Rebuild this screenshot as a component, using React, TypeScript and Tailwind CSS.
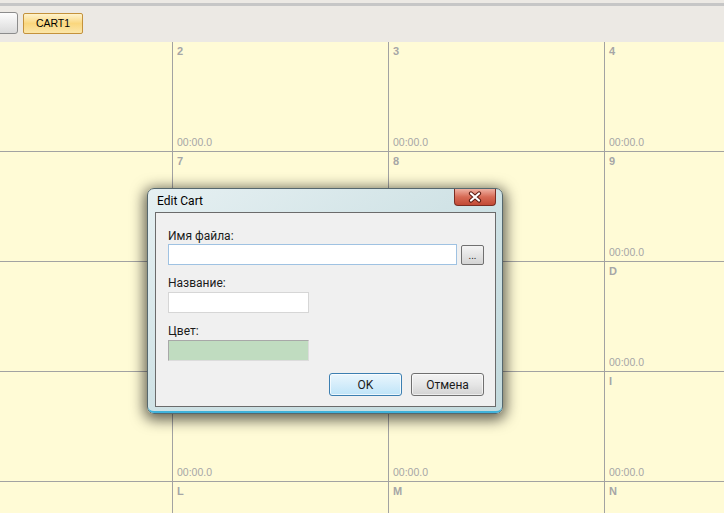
import React from "react";

const rows: string[][] = [
  ["1", "2", "3", "4", "5"],
  ["6", "7", "8", "9", "0"],
  ["A", "B", "C", "D", "E"],
  ["F", "G", "H", "I", "J"],
  ["K", "L", "M", "N", "O"],
];

function Cell({ label, hidden, noTime }: { label: string; hidden: boolean; noTime: boolean }) {
  return (
    <div className="w-[216px] shrink-0 h-full border-l border-[#a2a2a2] flex flex-col justify-between pl-[4px] pt-[3px] pb-[2px] text-[#a6a6a6] text-[11px] leading-[13px] [font-family:'Liberation_Sans',Arial,sans-serif]">
      {hidden ? null : (
        <>
          <span className="font-bold">{label}</span>
          {noTime ? null : <span className="text-[10.5px]">00:00.0</span>}
        </>
      )}
    </div>
  );
}

function CloseX() {
  return (
    <svg width="16" height="12" viewBox="0 0 16 12">
      <path d="M4 2.5 L12 9.5 M12 2.5 L4 9.5" stroke="#5b1c12" strokeWidth="4.2" strokeLinecap="round" />
      <path d="M4 2.5 L12 9.5 M12 2.5 L4 9.5" stroke="#ffffff" strokeWidth="2.2" strokeLinecap="round" />
    </svg>
  );
}

export default function App() {
  return (
    <div className="relative w-[724px] h-[513px] overflow-hidden bg-[#ece9e4]">
      {/* toolbar */}
      <div className="h-[42px] flex flex-col">
        <div className="h-[3px] bg-[#ece9e4]" />
        <div className="h-[3px] bg-[#c6c6c6]" />
        <div className="flex items-start pt-[6px]">
          <div className="ml-[-20px] w-[38px] h-[22px] rounded-[3px] border border-[#8c8c8c] bg-gradient-to-b from-[#fdfdfd] to-[#dadada]" />
          <div className="ml-[5px] mt-[1px] w-[60px] h-[21px] rounded-[2px] border border-[#c4923c] bg-gradient-to-b from-[#fff3cc] via-[#fad77e] to-[#fbe6a8] flex items-center justify-center text-[10.5px] text-black [font-family:'Liberation_Sans',Arial,sans-serif]">
            CART1
          </div>
        </div>
      </div>

      {/* grid */}
      <div className="ml-[-44px] flex flex-col bg-[#fffbd6]">
        {rows.map((r, i) => (
          <div key={i} className="h-[110px] shrink-0 flex border-b border-[#a2a2a2]">
            {r.map((l, j) => (
              <Cell key={l} label={l} hidden={j === 0 || j === 4} noTime={i === 4} />
            ))}
          </div>
        ))}
      </div>

      {/* dialog */}
      <div className="absolute left-[147px] top-[188px] w-[356px] h-[226px] rounded-[7px] border border-[#56686e] bg-gradient-to-br from-[#e6f0f2] via-[#cfe2e5] to-[#c3dadd] shadow-[0_3px_14px_3px_rgba(0,0,0,0.62)] [font-family:Roboto,'Noto_Sans',sans-serif]">
        <div className="absolute inset-0 rounded-[6px] border-b-[2px] border-[#3fb2da] pointer-events-none" style={{ borderTopWidth: 0, borderLeftWidth: 0, borderRightWidth: 0 }} />
        <div className="relative h-[23px] pl-[9px] pt-[5px] text-[12px] leading-[15px] text-black">
          Edit Cart
          <div className="absolute right-[6px] top-0 w-[42px] h-[17px] rounded-b-[4px] border border-t-0 border-[#7b2d22] bg-gradient-to-b from-[#eeb0a2] via-[#d66a55] to-[#c24a35] flex items-center justify-center">
            <CloseX />
          </div>
        </div>
        <div className="relative ml-[7px] w-[341px] h-[195px] border border-[#6b6b6b] bg-[#f0f0f0] pt-[16px] pl-[12px] text-[12px] leading-[14px] text-[#1b1b1b]">
          <div className="h-[15px]">Имя файла:</div>
          <div className="flex items-start">
            <div className="w-[289px] h-[21px] bg-white border border-[#9fc2e2]" />
            <div className="ml-[4px] mt-[1px] w-[23px] h-[20px] rounded-[2px] border border-[#707070] bg-gradient-to-b from-[#f4f4f4] to-[#d4d4d4] flex items-end justify-center pb-[3px] text-[10px] leading-[10px]">
              ...
            </div>
          </div>
          <div className="mt-[11px] h-[15px]">Название:</div>
          <div className="mt-[1px] w-[141px] h-[21px] bg-white border border-[#d6d6d6]" />
          <div className="mt-[11px] h-[15px]">Цвет:</div>
          <div className="mt-[1px] w-[141px] h-[21px] bg-[#c0dcc0] border border-[#a8a8a8] border-r-[#dcdcdc] border-b-[#dcdcdc]" />
          <div className="mt-[12px] flex justify-end pr-[11px] gap-[9px]">
            <div className="w-[73px] h-[23px] rounded-[3px] border border-[#3c7fb1] bg-gradient-to-b from-[#eaf6fd] to-[#bfe4f8] shadow-[inset_0_0_0_1px_rgba(255,255,255,0.7)] flex items-center justify-center">
              OK
            </div>
            <div className="w-[73px] h-[23px] rounded-[3px] border border-[#707070] bg-gradient-to-b from-[#f3f3f3] via-[#e6e6e6] to-[#d2d2d2] shadow-[inset_0_0_0_1px_rgba(255,255,255,0.6)] flex items-center justify-center">
              Отмена
            </div>
          </div>
        </div>
      </div>
    </div>
  );
}
